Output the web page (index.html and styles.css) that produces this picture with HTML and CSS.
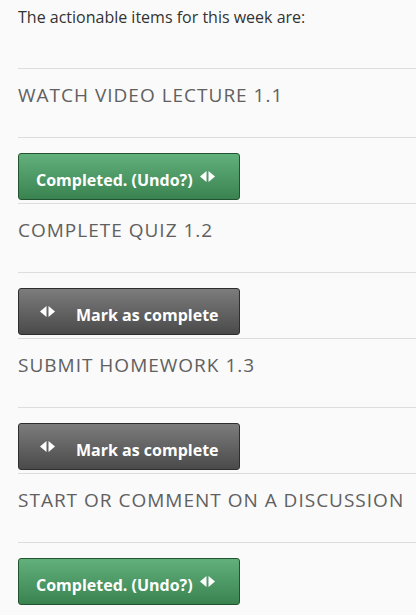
FILE: index.html
```html
<!DOCTYPE html>
<html>
<head>
<meta charset="utf-8">
<link rel="stylesheet" href="styles.css">
</head>
<body>
<div class="page">
  <p class="intro">The actionable items for this week are:</p>
  <ul class="items">
    <li class="item">
      <h3 class="item-title">WATCH VIDEO LECTURE 1.1</h3>
      <div class="item-action">
        <button class="btn btn-done"><span class="label">Completed. (Undo?)</span><svg class="toggle" viewBox="0 0 15 11" width="15" height="11"><polygon points="6.5,0 6.5,11 0,5.5"/><polygon points="8.5,0 8.5,11 15,5.5"/></svg></button>
      </div>
    </li>
    <li class="item">
      <h3 class="item-title">COMPLETE QUIZ 1.2</h3>
      <div class="item-action">
        <button class="btn btn-todo"><svg class="toggle" viewBox="0 0 15 11" width="15" height="11"><polygon points="6.5,0 6.5,11 0,5.5"/><polygon points="8.5,0 8.5,11 15,5.5"/></svg><span class="label">Mark as complete</span></button>
      </div>
    </li>
    <li class="item">
      <h3 class="item-title">SUBMIT HOMEWORK 1.3</h3>
      <div class="item-action">
        <button class="btn btn-todo"><svg class="toggle" viewBox="0 0 15 11" width="15" height="11"><polygon points="6.5,0 6.5,11 0,5.5"/><polygon points="8.5,0 8.5,11 15,5.5"/></svg><span class="label">Mark as complete</span></button>
      </div>
    </li>
    <li class="item">
      <h3 class="item-title">START OR COMMENT ON A DISCUSSION</h3>
      <div class="item-action">
        <button class="btn btn-done"><span class="label">Completed. (Undo?)</span><svg class="toggle" viewBox="0 0 15 11" width="15" height="11"><polygon points="6.5,0 6.5,11 0,5.5"/><polygon points="8.5,0 8.5,11 15,5.5"/></svg></button>
      </div>
    </li>
  </ul>
</div>
</body>
</html>
```
FILE: styles.css
```css
html, body {
  margin: 0;
  padding: 0;
  background: #fafafa;
}
body {
  font-family: "Open Sans", "DejaVu Sans", sans-serif;
  overflow: hidden;
}
.page {
  padding-left: 18px;
}
.intro {
  margin: 0;
  padding-top: 6px;
  font-size: 16px;
  line-height: 22px;
  color: #333;
  height: 62px;
}
.items {
  list-style: none;
  margin: 0;
  padding: 0;
}
.item-title {
  margin: 0;
  border-top: 1px solid #dddddd;
  padding: 12px 0 28px;
  font-size: 19px;
  line-height: 28px;
  font-weight: 400;
  letter-spacing: 1px;
  color: #606060;
  white-space: nowrap;
}
.item-action {
  border-top: 1px solid #dddddd;
  padding: 15px 0 3px;
}
.btn {
  display: flex;
  align-items: center;
  box-sizing: border-box;
  width: 222px;
  height: 47px;
  margin: 0;
  border-radius: 3px;
  font-family: "Open Sans", "DejaVu Sans", sans-serif;
  font-size: 16px;
  font-weight: 700;
  color: #fff;
  cursor: pointer;
}
.btn .label {
  padding-top: 6px;
}
.btn .toggle {
  fill: #fff;
  flex: none;
}
.btn-done {
  padding: 0 0 0 17px;
  border: 1px solid #22552f;
  background: linear-gradient(#62b07c, #3a8350);
}
.btn-done .toggle {
  margin-left: 7px;
}
.btn-todo {
  padding: 0 0 0 21px;
  border: 1px solid #2e2e2e;
  background: linear-gradient(#7c7c7c, #4a4a4a);
}
.btn-todo .toggle {
  margin-right: 21px;
}
```
